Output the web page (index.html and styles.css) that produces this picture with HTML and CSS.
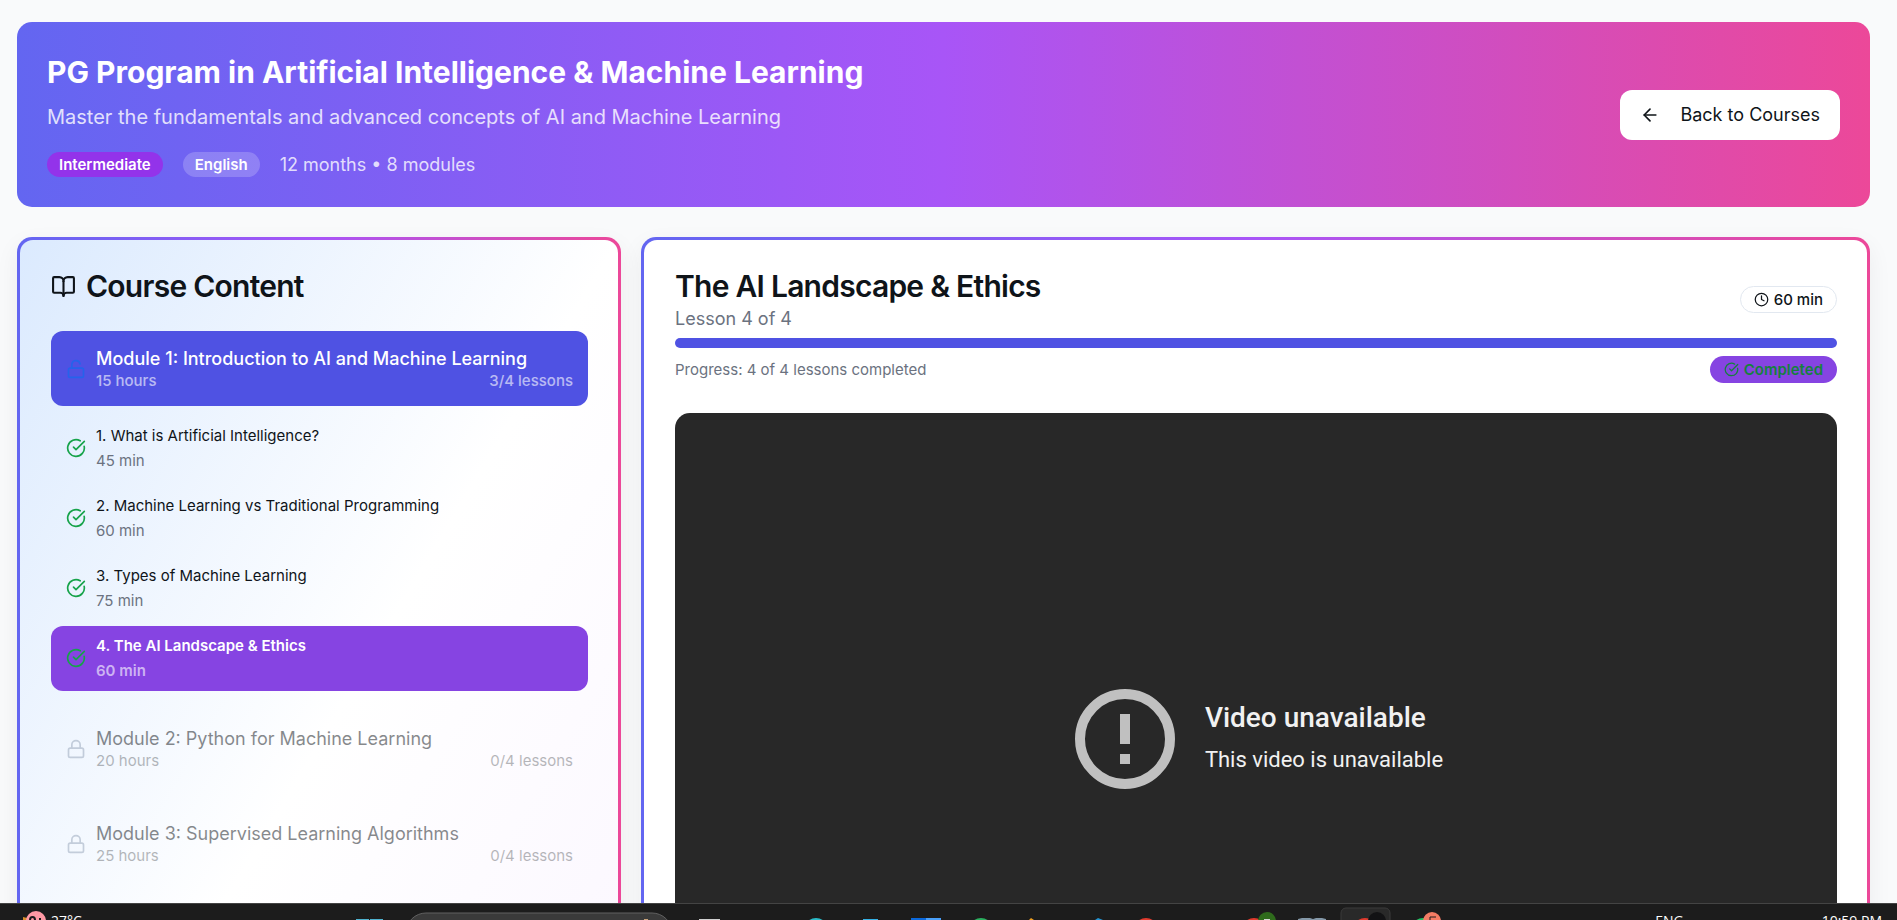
FILE: index.html
```html
<!DOCTYPE html>
<html lang="en">
<head>
<meta charset="utf-8">
<meta name="viewport" content="width=device-width, initial-scale=1">
<title>PG Program in Artificial Intelligence &amp; Machine Learning</title>
<link rel="stylesheet" href="styles.css">
</head>
<body>
<svg class="sprite" aria-hidden="true">
  <symbol id="check" viewBox="0 0 24 24"><path d="M21.801 10A10 10 0 1 1 17 3.335"/><path d="m9 11 3 3L22 4"/></symbol>
  <symbol id="lock" viewBox="0 0 24 24"><rect width="18" height="11" x="3" y="11" rx="2" ry="2"/><path d="M7 11V7a5 5 0 0 1 10 0v4"/></symbol>
  <symbol id="lock-open" viewBox="0 0 24 24"><rect width="18" height="11" x="3" y="11" rx="2" ry="2"/><path d="M7 11V7a5 5 0 0 1 9.9-1"/></symbol>
  <symbol id="clock" viewBox="0 0 24 24"><circle cx="12" cy="12" r="10"/><path d="M12 6v6l4 2"/></symbol>
</svg>
<main class="page">
  <header class="hero">
    <div class="hero-text">
      <h1 class="hero-title">PG Program in Artificial Intelligence &amp; Machine Learning</h1>
      <p class="hero-sub">Master the fundamentals and advanced concepts of AI and Machine Learning</p>
      <div class="hero-meta">
        <span class="pill pill-level">Intermediate</span>
        <span class="pill pill-lang">English</span>
        <span>12 months • 8 modules</span>
      </div>
    </div>
    <button class="back" type="button">
      <svg class="icon icon-back" viewBox="0 0 24 24"><path d="m12 19-7-7 7-7"/><path d="M19 12H5"/></svg>
      Back to Courses
    </button>
  </header>

  <div class="columns">
    <aside class="frame">
      <div class="card card-tint">
        <h2 class="card-title">
          <svg class="icon icon-book" viewBox="0 0 24 24"><path d="M12 7v14"/><path d="M3 18a1 1 0 0 1-1-1V4a1 1 0 0 1 1-1h5a4 4 0 0 1 4 4 4 4 0 0 1 4-4h5a1 1 0 0 1 1 1v13a1 1 0 0 1-1 1h-6a3 3 0 0 0-3 3 3 3 0 0 0-3-3z"/></svg>
          Course Content
        </h2>
        <section class="group">
          <button class="row module module-open" type="button">
            <svg class="icon icon-row icon-open"><use href="#lock-open"/></svg>
            <span class="row-text"><span class="module-name">Module 1: Introduction to AI and Machine Learning</span>
            <span class="module-meta"><span>15 hours</span><span>3/4 lessons</span></span></span>
          </button>
          <div class="lessons">
            <button class="row lesson" type="button"><svg class="icon icon-row icon-done"><use href="#check"/></svg><span class="row-text lesson-text"><span>1. What is Artificial Intelligence?</span><span class="lesson-time">45 min</span></span></button>
            <button class="row lesson" type="button"><svg class="icon icon-row icon-done"><use href="#check"/></svg><span class="row-text lesson-text"><span>2. Machine Learning vs Traditional Programming</span><span class="lesson-time">60 min</span></span></button>
            <button class="row lesson" type="button"><svg class="icon icon-row icon-done"><use href="#check"/></svg><span class="row-text lesson-text"><span>3. Types of Machine Learning</span><span class="lesson-time">75 min</span></span></button>
            <button class="row lesson lesson-current" type="button"><svg class="icon icon-row icon-done"><use href="#check"/></svg><span class="row-text lesson-text"><span>4. The AI Landscape &amp; Ethics</span><span class="lesson-time">60 min</span></span></button>
          </div>
        </section>
        <section class="group">
          <button class="row module module-locked" type="button" disabled>
            <svg class="icon icon-row icon-locked"><use href="#lock"/></svg>
            <span class="row-text"><span class="module-name">Module 2: Python for Machine Learning</span>
            <span class="module-meta"><span>20 hours</span><span>0/4 lessons</span></span></span>
          </button>
        </section>
        <section class="group">
          <button class="row module module-locked" type="button" disabled>
            <svg class="icon icon-row icon-locked"><use href="#lock"/></svg>
            <span class="row-text"><span class="module-name">Module 3: Supervised Learning Algorithms</span>
            <span class="module-meta"><span>25 hours</span><span>0/4 lessons</span></span></span>
          </button>
        </section>
      </div>
    </aside>

    <section class="frame">
      <div class="card">
        <div class="lesson-head">
          <div>
            <h2 class="card-title lesson-title">The AI Landscape &amp; Ethics</h2>
            <p class="lesson-sub">Lesson 4 of 4</p>
          </div>
          <span class="badge badge-time"><svg class="icon icon-badge"><use href="#clock"/></svg>60 min</span>
        </div>
        <div class="progress" role="progressbar" aria-label="Lessons completed" aria-valuemin="0" aria-valuemax="4" aria-valuenow="4"></div>
        <div class="progress-row">
          <span>Progress: 4 of 4 lessons completed</span>
          <span class="badge badge-done"><svg class="icon icon-badge"><use href="#check"/></svg>Completed</span>
        </div>
        <div class="video">
          <svg class="video-icon" viewBox="0 0 100 100"><circle cx="50" cy="50" r="45" fill="none" stroke="#c0c0c0" stroke-width="10"/><path d="M45 25h10v30H45zM45 65h10v10H45z" fill="#c0c0c0"/></svg>
          <div>
            <p class="video-title">Video unavailable</p>
            <p class="video-sub">This video is unavailable</p>
          </div>
        </div>
      </div>
    </section>
  </div>
</main>

<footer class="taskbar">
  <svg class="weather" viewBox="0 0 24 16"><path d="M1 13l4 1v2H1z" fill="#d9902a"/><circle cx="14" cy="17" r="10" fill="#ff99a4"/><path d="M8 16c0-4 5-4 5 0M18 14v2" fill="none" stroke="#1c1c1c" stroke-width="2"/></svg>
  <span>27°C</span>
  <svg class="apps" viewBox="0 0 1090 16" preserveAspectRatio="xMinYMin meet">
    <path d="M16 15h13v1H16zM30 15h13v1H30z" fill="#4fb3d0"/>
    <rect x="66" y="9" width="266" height="40" rx="20" fill="#3a3a3a" stroke="#606060"/>
    <rect x="304" y="15" width="4" height="1" fill="#c9a37a"/>
    <path d="M359 15h21v1h-21z" fill="#d0d0d0"/>
    <circle cx="476" cy="26" r="12" fill="#2bbcc9"/>
    <path d="M523 15h15v1h-15z" fill="#35b2e6"/>
    <path d="M571 14h15v2h-15z" fill="#0b69dc"/><path d="M586 14h15v2h-15z" fill="#4aa0fa"/>
    <circle cx="641" cy="26" r="12" fill="#2bb160"/>
    <path d="M689 16l2-2 3 2z" fill="#f0a020"/><path d="M755 16l3-2 5 2z" fill="#2596d4"/>
    <circle cx="806" cy="26" r="12" fill="#e23b2e"/><circle cx="914" cy="26" r="12" fill="#e23b2e"/>
    <circle cx="927" cy="17" r="9" fill="#2f6b1c"/><path d="M924 15h6v1h-6z" fill="#d5d5d5"/>
    <path d="M958 15l4-1h8l3 1 3-1h6l4 1v1h-28z" fill="#8498a8"/>
    <rect x="1001" y="4" width="49" height="40" rx="5" fill="#292929" stroke="#3a3a3a"/>
    <circle cx="1025" cy="26" r="12" fill="#e23b2e"/><circle cx="1037" cy="17" r="9" fill="#121214"/>
    <circle cx="1083" cy="26" r="12" fill="#25c065"/><circle cx="1092" cy="17" r="9" fill="#f47c64"/><path d="M1090 16v-3h6" fill="none" stroke="#1c1c1c"/>
  </svg>
  <span class="lang">ENG</span>
  <time>10:59 PM</time>
</footer>
</body>
</html>
```
FILE: styles.css
```css
* { box-sizing: border-box; }
body, h1, h2, p { margin: 0; }
button { font: inherit; color: inherit; border: 0; background: none; text-align: left; }

body {
  height: 100vh;
  display: flex;
  flex-direction: column;
  overflow: hidden;
  background: #f9fafb;
  color: #0f1419;
  font-family: Inter, "Liberation Sans", sans-serif;
  font-size: 18px;
  line-height: 25px;
}

.sprite { display: none; }
.icon { fill: none; stroke: currentColor; stroke-width: 2; stroke-linecap: round; stroke-linejoin: round; flex: none; }

.page { flex: 1; min-height: 0; overflow: hidden; padding: 22px 27px 0 17px; display: flex; flex-direction: column; gap: 30px; }

.hero {
  flex: none;
  display: flex;
  align-items: center;
  justify-content: space-between;
  padding: 30px;
  border-radius: 15px;
  background: linear-gradient(90deg, #6366f1, #a855f7 50%, #ec4899);
  color: #fff;
}
.hero-title { font-size: 30px; line-height: 40px; font-weight: 700; }
.hero-sub { margin-top: 10px; font-size: 20px; line-height: 30px; opacity: .8; }
.hero-meta { margin-top: 20px; display: flex; align-items: center; gap: 20px; color: rgba(255, 255, 255, .8); }
.pill { padding: 0 12px; border-radius: 13px; font-size: 15px; line-height: 25px; font-weight: 600; color: #fff; }
.pill-level { background: #9333ea; }
.pill-lang { background: rgba(255, 255, 255, .2); }
.back { display: flex; align-items: center; gap: 20px; padding: 0 20px; height: 50px; border-radius: 12px; background: #fff; color: #0f1419; }
.icon-back { width: 20px; height: 20px; }

.columns { flex: none; display: grid; grid-template-columns: minmax(0, 604fr) minmax(0, 1229fr); gap: 20px; }
.frame {
  display: flex;
  padding: 3px;
  border-radius: 15px;
  background: linear-gradient(90deg, #6366f1, #a855f7 50%, #ec4899);
  box-shadow: 0 8px 24px rgba(15, 20, 25, .06);
}
.card { flex: 1; min-width: 0; padding: 28px 30px 180px 31px; border-radius: 13px; background: #fff; }
.card-tint { background: linear-gradient(to bottom right, #dbeafe, #fff 50%, #faf5ff); }
.card-title { display: flex; align-items: center; gap: 10px; font-size: 30px; line-height: 36px; font-weight: 600; letter-spacing: -0.025em; }
.icon-book { width: 25px; height: 25px; }

.group { margin-top: 20px; }
.card-title + .group { margin-top: 27px; }
.row { width: 100%; display: flex; align-items: center; gap: 10px; padding: 0 15px; border-radius: 12px; }
.row-text { flex: 1; min-width: 0; display: flex; flex-direction: column; }
.icon-row { width: 20px; height: 20px; }
.module { height: 75px; }
.module .row-text { padding-top: 2px; }
.module-open { background: #4f52e3; color: #fff; font-weight: 500; }
.module-name { line-height: 22px; }
.module-meta { display: flex; justify-content: space-between; font-size: 15px; line-height: 21px; opacity: .6; }
.module-locked { opacity: .5; color: #0f1419; }
.icon-open { color: #2563eb; }
.icon-locked { color: #94a3b8; }
.icon-done { color: #16a34a; }
.lessons { margin-top: 10px; display: flex; flex-direction: column; gap: 5px; }
.lesson { height: 65px; padding-bottom: 2px; font-size: 15px; line-height: 25px; }
.lesson-time { color: #6b7280; }
.lesson-current { background: #8644e2; color: #fff; font-weight: 600; }
.lesson-current .lesson-time { color: rgba(255, 255, 255, .6); }

.lesson-head { display: flex; align-items: center; justify-content: space-between; }
.lesson-sub { margin-top: 2px; color: #6b7280; }
.badge { display: flex; align-items: center; gap: 5px; height: 27px; padding: 0 14px; border-radius: 14px; font-size: 15px; font-weight: 600; }
.badge-time { border: 1px solid #e2e8f0; padding: 0 13px; font-weight: 500; }
.badge-done { background: #8644e2; color: #15803d; }
.icon-badge { width: 15px; height: 15px; }
.progress { margin-top: 7px; height: 10px; border-radius: 5px; background: #4f52e3; }
.progress-row { margin-top: 8px; display: flex; align-items: center; justify-content: space-between; font-size: 15px; color: #6b7280; }
.video {
  margin-top: 30px;
  aspect-ratio: 16 / 9;
  padding: 0 0 2px 6px;
  border-radius: 15px;
  background: #282828;
  display: flex;
  align-items: center;
  justify-content: center;
  gap: 30px;
  color: #f1f1f1;
  font-family: Roboto, sans-serif;
}
.video-icon { width: 100px; height: 100px; }
.video-title { font-size: 28px; line-height: 42px; font-weight: 500; }
.video-sub { font-size: 22px; line-height: 42px; }

.taskbar {
  flex: none;
  height: 17px;
  overflow: hidden;
  display: flex;
  align-items: flex-start;
  border-top: 1px solid #444;
  background: #1c1c1c;
  color: #fff;
  font-family: "Open Sans", sans-serif;
  font-size: 14px;
  line-height: 34px;
  padding: 0 15px 0 22px;
}
.weather { width: 24px; height: 16px; margin-right: 5px; flex: none; }
.apps { width: 1090px; height: 16px; margin-left: 258px; flex: none; overflow: visible; }
.lang { margin-left: auto; margin-right: 138px; }
```
